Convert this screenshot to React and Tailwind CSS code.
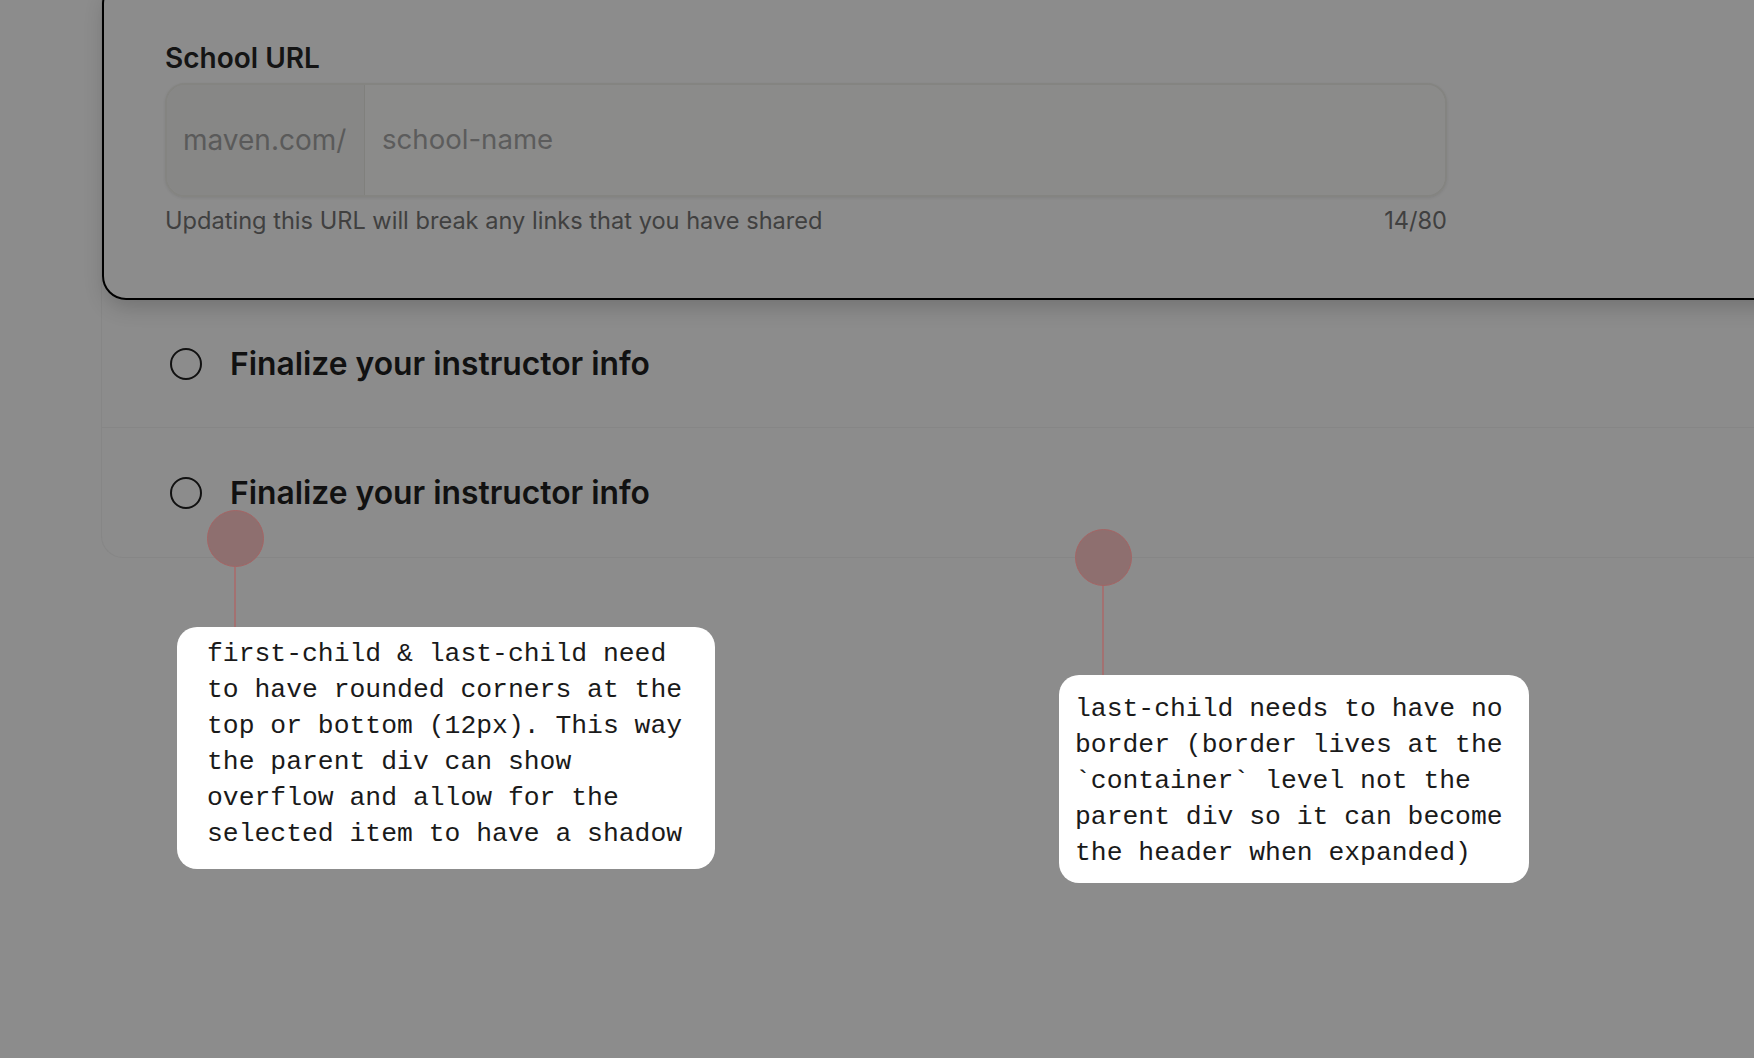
import React from 'react';

const Pin = ({ x, y, lineTo }) => (
  <>
    <div
      className="absolute w-[2px] bg-[#a37171]"
      style={{ left: x - 1, top: y + 28, height: lineTo - (y + 28) }}
    />
    <div
      className="absolute w-[57px] h-[57px] rounded-full bg-[#8e6f6f] border-[1.5px] border-[#a46565]"
      style={{ left: x - 28.5, top: y - 28.5 }}
    />
  </>
);

const Note = ({ className, lines }) => (
  <div
    className={`absolute bg-white rounded-[20px] text-[#1a1a1a] text-[26.4px] leading-[36px] ${className}`}
    style={{ fontFamily: '"Liberation Mono", "DejaVu Sans Mono", monospace' }}
  >
    {lines.map((line, i) => (
      <div key={i} className="whitespace-pre">
        {line}
      </div>
    ))}
  </div>
);

const StepRow = ({ last }) => (
  <div
    className={`flex items-center gap-[28px] pl-[68px] ${
      last ? 'h-[129px]' : 'h-[128px] border-b border-[#868686]'
    }`}
  >
    <div className="w-[32px] h-[32px] rounded-full border-2 border-[#111]" />
    <span className="text-[31.8px] font-semibold text-[#111]">
      Finalize your instructor info
    </span>
  </div>
);

export default function App() {
  return (
    <div
      className="relative w-[1754px] h-[1058px] overflow-hidden bg-[#8c8c8c]"
      style={{ fontFamily: 'Inter, "Noto Sans", sans-serif' }}
    >
      <div className="ml-[101px] -mt-[20px] w-[1720px] border-l border-b border-[#868686] rounded-bl-[22px]">
        {/* selected step, expanded */}
        <div className="rounded-[24px] border-2 border-black pl-[61px] pt-[59px] pb-[61px] shadow-[0_10px_22px_-4px_rgba(0,0,0,0.2)]">
          <label className="block text-[28px] leading-[34px] font-semibold text-[#141414]">
            School URL
          </label>
          <div className="mt-2 flex w-[1282px] h-[114px] rounded-[20px] border-2 border-[#848481] overflow-hidden shadow-[0_1px_3px_rgba(0,0,0,0.08)]">
            <div className="flex items-center w-[198px] pl-[16px] bg-[#878786] border-r border-[#80807d] text-[28px] text-[#5a5a5a]">
              maven.com/
            </div>
            <div className="flex items-center flex-1 pl-[17px] bg-[#8b8b8a] text-[27.6px] text-[#5c5c5c]">
              school-name
            </div>
          </div>
          <div className="mt-2 flex justify-between w-[1282px] text-[23.6px] leading-[32px] text-[#404040]">
            <span>Updating this URL will break any links that you have shared</span>
            <span>14/80</span>
          </div>
        </div>

        <StepRow />
        <StepRow last />
      </div>

      <Pin x={235} y={538.5} lineTo={628} />
      <Pin x={1103} y={557} lineTo={676} />

      <Note
        className="left-[177px] top-[627px] w-[538px] pl-[30px] pt-[9px] pb-[17px]"
        lines={[
          'first-child & last-child need',
          'to have rounded corners at the',
          'top or bottom (12px). This way',
          'the parent div can show',
          'overflow and allow for the',
          'selected item to have a shadow',
        ]}
      />
      <Note
        className="left-[1059px] top-[675px] w-[470px] pl-[16px] pt-[16px] pb-[12px]"
        lines={[
          'last-child needs to have no',
          'border (border lives at the',
          '`container` level not the',
          'parent div so it can become',
          'the header when expanded)',
        ]}
      />
    </div>
  );
}
